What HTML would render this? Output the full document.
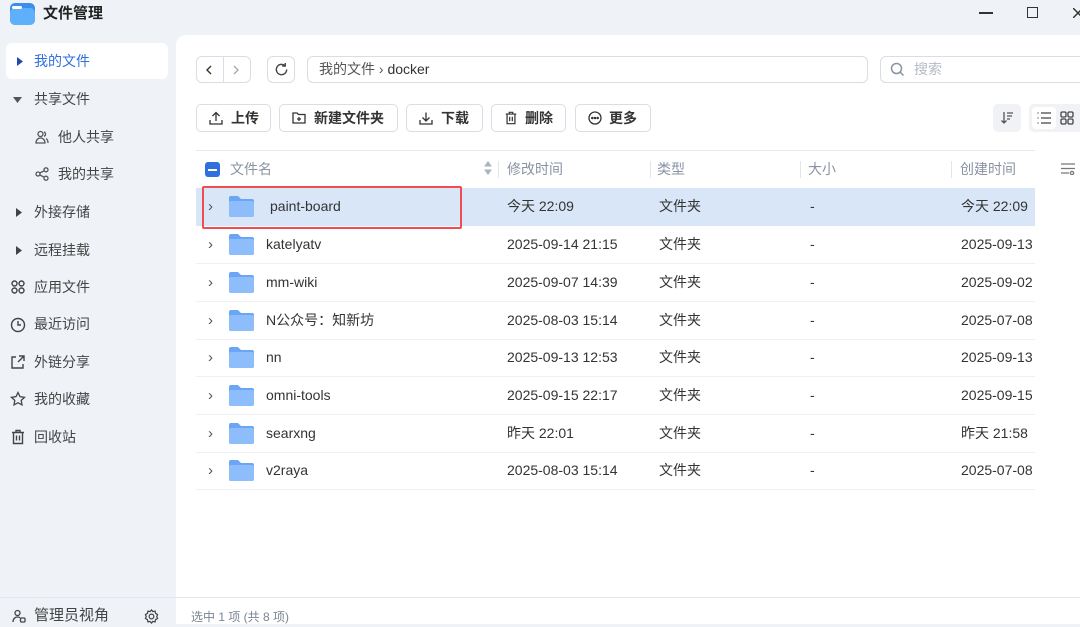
<!DOCTYPE html>
<html><head><meta charset="utf-8"><style>
*{box-sizing:border-box;margin:0;padding:0}
body{width:1080px;height:624px;overflow:hidden;background:#eff3f8;font-family:"Liberation Sans","Noto Sans CJK SC",sans-serif;color:#333;position:relative}
.abs{position:absolute}
.title{left:43px;top:3px;font-size:15px;font-weight:bold;color:#222;line-height:22px}
.side{font-size:14px;color:#444}
.side div.it{position:absolute;left:0;width:168px;height:36px;line-height:36px}
.side svg{position:absolute}
.panel{left:176px;top:35px;width:904px;height:562px;background:#fff;border-top-left-radius:10px}
.btn{position:absolute;top:104px;height:28px;border:1px solid #d8dde6;border-radius:5px;background:#fff;font-size:14px;font-weight:bold;color:#333;line-height:26px}
.btn svg{position:absolute;left:12px;top:6px}
.hd{position:absolute;top:150px;left:196px;width:839px;height:37px;border-top:1px solid #e6e9ee;font-size:14px;color:#8a93a3}
.hd span{position:absolute;top:0;line-height:36px}
.sep{position:absolute;top:10px;width:1px;height:17px;background:#e2e5ea}
.row{position:absolute;left:196px;width:839px;height:38px;border-bottom:1px solid #eef0f3;font-size:14px;color:#333}
.row span{position:absolute;top:0;line-height:37px}
.row .ch{left:12px;color:#555;font-size:15px}
.fold{position:absolute;left:33px;top:8px;width:25px;height:21px}
</style></head><body>
<svg class="abs" style="left:10px;top:3px" width="25" height="22" viewBox="0 0 25 22"><rect x="0" y="0" width="25" height="22" rx="5" fill="#3b8df0"/><rect x="0" y="5" width="25" height="17" rx="5" fill="#5fb0fa"/><rect x="2" y="3" width="10" height="3" rx="1.5" fill="#fff"/></svg>
<div class="abs title">文件管理</div>
<div class="abs" style="left:979px;top:12px;width:14px;height:1.5px;background:#333"></div>
<div class="abs" style="left:1027px;top:7px;width:11px;height:11px;border:1.5px solid #333"></div>
<svg class="abs" style="left:1073px;top:8px" width="10" height="10" viewBox="0 0 10 10"><path d="M0 0l10 10M10 0L0 10" stroke="#333" stroke-width="1.5"/></svg>

<div class="side">
<div class="it" style="left:6px;top:43px;width:162px;background:#fff;border-radius:6px;color:#2f6fde"><svg style="left:11px;top:14px" width="6" height="9"><path d="M0 0l6 4.5L0 9z" fill="#1e4fa8"/></svg><span style="position:absolute;left:28px">我的文件</span></div>
<div class="it" style="top:81px"><svg style="left:13px;top:16px" width="9" height="6"><path d="M0 0h9L4.5 6z" fill="#555"/></svg><span style="position:absolute;left:34px">共享文件</span></div>
<div class="it" style="top:119px"><svg style="left:35px;top:11px" width="14" height="14" viewBox="0 0 14 14" fill="none" stroke="#555" stroke-width="1.3"><circle cx="5.5" cy="4" r="2.5"/><path d="M1 13c0-3 2-5 4.5-5s4.5 2 4.5 5zM9 1.8a2.5 2.5 0 0 1 0 4.6M11 8.5c1.3.8 2 2.5 2 4.5"/></svg><span style="position:absolute;left:58px">他人共享</span></div>
<div class="it" style="top:156px"><svg style="left:35px;top:11px" width="14" height="14" viewBox="0 0 14 14" fill="none" stroke="#555" stroke-width="1.3"><circle cx="3" cy="7" r="2"/><circle cx="11" cy="2.8" r="2"/><circle cx="11" cy="11.2" r="2"/><path d="M4.8 6l4.4-2.2M4.8 8l4.4 2.2"/></svg><span style="position:absolute;left:58px">我的共享</span></div>
<div class="it" style="top:194px"><svg style="left:16px;top:14px" width="6" height="9"><path d="M0 0l6 4.5L0 9z" fill="#444"/></svg><span style="position:absolute;left:34px">外接存储</span></div>
<div class="it" style="top:232px"><svg style="left:16px;top:14px" width="6" height="9"><path d="M0 0l6 4.5L0 9z" fill="#444"/></svg><span style="position:absolute;left:34px">远程挂载</span></div>
<div class="it" style="top:269px"><svg style="left:11px;top:11px" width="14" height="14" viewBox="0 0 14 14" fill="none" stroke="#444" stroke-width="1.4"><circle cx="3.5" cy="3.5" r="2.5"/><circle cx="10.5" cy="3.5" r="2.5"/><circle cx="3.5" cy="10.5" r="2.5"/><circle cx="10.5" cy="10.5" r="2.5"/></svg><span style="position:absolute;left:34px">应用文件</span></div>
<div class="it" style="top:306px"><svg style="left:10px;top:11px" width="16" height="16" viewBox="0 0 16 16" fill="none" stroke="#444" stroke-width="1.4"><circle cx="8" cy="8" r="6.5"/><path d="M8 4v4h3"/></svg><span style="position:absolute;left:34px">最近访问</span></div>
<div class="it" style="top:344px"><svg style="left:11px;top:11px" width="14" height="14" viewBox="0 0 14 14" fill="none" stroke="#444" stroke-width="1.4"><path d="M5 2H1v11h11V9M8 1h5v5M13 1L7 7"/></svg><span style="position:absolute;left:34px">外链分享</span></div>
<div class="it" style="top:381px"><svg style="left:10px;top:10px" width="16" height="16" viewBox="0 0 16 16" fill="none" stroke="#444" stroke-width="1.3"><path d="M8 1.5l2 4.2 4.5.6-3.3 3.1.8 4.5L8 11.7l-4 2.2.8-4.5L1.5 6.3 6 5.7z"/></svg><span style="position:absolute;left:34px">我的收藏</span></div>
<div class="it" style="top:419px"><svg style="left:11px;top:10px" width="14" height="16" viewBox="0 0 14 16" fill="none" stroke="#444" stroke-width="1.4"><path d="M1 3.5h12M5 3.5V1.5h4v2M2.5 3.5V14.5h9V3.5M5.5 6.5v5M8.5 6.5v5"/></svg><span style="position:absolute;left:34px">回收站</span></div>
</div>

<div class="abs panel"></div>
<div class="abs" style="left:0;top:597px;width:1080px;height:1px;background:#e3e7ed"></div>
<div class="abs" style="left:176px;top:598px;width:904px;height:26px;background:#fff"></div>
<svg class="abs" style="left:12px;top:609px" width="14" height="14" viewBox="0 0 14 14" fill="none" stroke="#444" stroke-width="1.3"><circle cx="5.5" cy="4" r="2.5"/><path d="M1 13c0-3 2-5 4.5-5 1 0 2 .3 2.6.8"/><rect x="8.5" y="9" width="4.5" height="4" rx="1"/></svg>
<div class="abs" style="left:34px;top:605px;font-size:15px;color:#444;line-height:22px">管理员视角</div>
<svg class="abs" style="left:144px;top:609px" width="15" height="15" viewBox="0 0 16 16" fill="none" stroke="#444" stroke-width="1.3"><circle cx="8" cy="8" r="2.5"/><path d="M8 1l1.5 1.8 2.3-.5.5 2.3L14.5 6 13.6 8l.9 2-2.2 1.4-.5 2.3-2.3-.5L8 15l-1.5-1.8-2.3.5-.5-2.3L1.5 10l.9-2-.9-2 2.2-1.4.5-2.3 2.3.5z"/></svg>
<div class="abs" style="left:191px;top:608px;font-size:12px;color:#7a8494;line-height:18px">选中 1 项 (共 8 项)</div>

<!-- nav -->
<div class="abs" style="left:196px;top:56px;width:55px;height:27px;border:1px solid #d8dde6;border-radius:6px"><div style="position:absolute;left:26px;top:0;width:1px;height:25px;background:#d8dde6"></div>
<svg style="position:absolute;left:9px;top:8px" width="6" height="10"><path d="M5 1L1 5l4 4" fill="none" stroke="#333" stroke-width="1.4"/></svg>
<svg style="position:absolute;left:36px;top:8px" width="6" height="10"><path d="M1 1l4 4-4 4" fill="none" stroke="#aaa" stroke-width="1.4"/></svg></div>
<div class="abs" style="left:267px;top:56px;width:28px;height:27px;border:1px solid #d8dde6;border-radius:6px"><svg style="position:absolute;left:6px;top:5px" width="15" height="15" viewBox="0 0 16 16" fill="none" stroke="#444" stroke-width="1.5"><path d="M13.5 8A5.5 5.5 0 1 1 11.5 3.8M12 1v3.3H8.7"/></svg></div>
<div class="abs" style="left:307px;top:56px;width:561px;height:27px;border:1px solid #d8dde6;border-radius:6px;font-size:14px;line-height:25px;padding-left:11px;color:#555">我的文件 › <span style="color:#333">docker</span></div>
<div class="abs" style="left:880px;top:56px;width:210px;height:27px;border:1px solid #d8dde6;border-radius:6px;font-size:14px;line-height:25px;padding-left:33px;color:#b5bcc7">搜索</div>
<svg class="abs" style="left:890px;top:62px" width="15" height="15" viewBox="0 0 15 15"><circle cx="6.5" cy="6.5" r="5" fill="none" stroke="#8a93a3" stroke-width="1.5"/><path d="M10 10l3.5 3.5" stroke="#8a93a3" stroke-width="1.5"/></svg>

<div class="btn" style="left:196px;width:75px"><svg width="14" height="14" viewBox="0 0 14 14" fill="none" stroke="#333" stroke-width="1.3"><path d="M7 10V1.5M3.5 5L7 1.5 10.5 5M1 9v4h12V9"/></svg><span style="position:absolute;left:34px">上传</span></div>
<div class="btn" style="left:279px;width:119px"><svg width="14" height="14" viewBox="0 0 14 14" fill="none" stroke="#333" stroke-width="1.3"><path d="M1 2h4l1.5 1.5H13V12H1zM7 6v4M5 8h4"/></svg><span style="position:absolute;left:34px">新建文件夹</span></div>
<div class="btn" style="left:406px;width:77px"><svg width="14" height="14" viewBox="0 0 14 14" fill="none" stroke="#333" stroke-width="1.3"><path d="M7 1.5V10M3.5 6.5L7 10l3.5-3.5M1 9v4h12V9"/></svg><span style="position:absolute;left:34px">下载</span></div>
<div class="btn" style="left:491px;width:75px"><svg width="14" height="14" viewBox="0 0 14 16" fill="none" stroke="#333" stroke-width="1.4"><path d="M1 3.5h12M5 3.5V1.5h4v2M2.5 3.5V14.5h9V3.5M5.5 6.5v5M8.5 6.5v5"/></svg><span style="position:absolute;left:33px">删除</span></div>
<div class="btn" style="left:575px;width:76px"><svg width="14" height="14" viewBox="0 0 14 14" fill="none" stroke="#333" stroke-width="1.3"><circle cx="7" cy="7" r="6"/><circle cx="4.3" cy="7" r=".6" fill="#333"/><circle cx="7" cy="7" r=".6" fill="#333"/><circle cx="9.7" cy="7" r=".6" fill="#333"/></svg><span style="position:absolute;left:33px">更多</span></div>
<div class="abs" style="left:993px;top:104px;width:28px;height:28px;background:#f0f2f5;border-radius:5px"><svg style="position:absolute;left:7px;top:7px" width="14" height="14" viewBox="0 0 14 14" fill="none" stroke="#555" stroke-width="1.3"><path d="M4 1v11M1.5 9.5L4 12l2.5-2.5M7 2h6M7 5h5M7 8h3"/></svg></div>
<div class="abs" style="left:1029px;top:104px;width:60px;height:28px;background:#f0f2f5;border-radius:5px"><div style="position:absolute;left:3px;top:3px;width:24px;height:22px;background:#fff;border-radius:4px"><svg style="position:absolute;left:5px;top:5px" width="14" height="12" viewBox="0 0 14 12" fill="none" stroke="#444" stroke-width="1.3"><path d="M4 1h10M4 6h10M4 11h10M0.5 1h1M0.5 6h1M0.5 11h1"/></svg></div><svg style="position:absolute;left:31px;top:7px" width="14" height="14" viewBox="0 0 14 14" fill="none" stroke="#444" stroke-width="1.3"><rect x="1" y="1" width="5" height="5" rx="1.2"/><rect x="8" y="1" width="5" height="5" rx="1.2"/><rect x="1" y="8" width="5" height="5" rx="1.2"/><rect x="8" y="8" width="5" height="5" rx="1.2"/></svg></div>

<div class="hd">
<div style="position:absolute;left:9px;top:11px;width:15px;height:15px;background:#2f6fde;border-radius:3px"><div style="position:absolute;left:3px;top:6.5px;width:9px;height:2px;background:#fff"></div></div>
<span style="left:34px">文件名</span>
<svg style="position:absolute;left:288px;top:10px" width="8" height="14"><path d="M0 5.5L4 0l4 5.5zM0 8.5L4 14l4-5.5z" fill="#aab3c0"/></svg>
<div class="sep" style="left:302px"></div><span style="left:311px">修改时间</span>
<div class="sep" style="left:454px"></div><span style="left:461px">类型</span>
<div class="sep" style="left:604px"></div><span style="left:612px">大小</span>
<div class="sep" style="left:755px"></div><span style="left:764px">创建时间</span>
</div>
<svg class="abs" style="left:1061px;top:163px" width="14" height="12" viewBox="0 0 14 12" fill="none" stroke="#777" stroke-width="1.3"><path d="M0 1h14M0 5.5h14M0 10h8"/><circle cx="11" cy="10" r="1.6"/></svg>

<div class="row" style="top:188px;background:#d8e6f7;border-bottom:none"><span class="ch">›</span><svg class="fold" viewBox="0 0 25 21"><path d="M0 2a2 2 0 0 1 2-2h7l3 3h11a2 2 0 0 1 2 2v14a2 2 0 0 1-2 2H2a2 2 0 0 1-2-2z" fill="#6ba5f5"/><rect x="0" y="5" width="25" height="16" rx="2" fill="#8dbdfa"/></svg><span style="left:74px">paint-board</span><span style="left:311px">今天 22:09</span><span style="left:463px">文件夹</span><span style="left:614px">-</span><span style="left:765px">今天 22:09</span></div>
<div class="abs" style="left:202px;top:186px;width:260px;height:43px;border:2.5px solid #ef4d50;border-radius:2px"></div>

<div class="row" style="top:226px"><span class="ch">›</span><svg class="fold" viewBox="0 0 25 21"><path d="M0 2a2 2 0 0 1 2-2h7l3 3h11a2 2 0 0 1 2 2v14a2 2 0 0 1-2 2H2a2 2 0 0 1-2-2z" fill="#6ba5f5"/><rect x="0" y="5" width="25" height="16" rx="2" fill="#8dbdfa"/></svg><span style="left:70px">katelyatv</span><span style="left:311px">2025-09-14 21:15</span><span style="left:463px">文件夹</span><span style="left:614px">-</span><span style="left:765px">2025-09-13</span></div>
<div class="row" style="top:264px"><span class="ch">›</span><svg class="fold" viewBox="0 0 25 21"><path d="M0 2a2 2 0 0 1 2-2h7l3 3h11a2 2 0 0 1 2 2v14a2 2 0 0 1-2 2H2a2 2 0 0 1-2-2z" fill="#6ba5f5"/><rect x="0" y="5" width="25" height="16" rx="2" fill="#8dbdfa"/></svg><span style="left:70px">mm-wiki</span><span style="left:311px">2025-09-07 14:39</span><span style="left:463px">文件夹</span><span style="left:614px">-</span><span style="left:765px">2025-09-02</span></div>
<div class="row" style="top:302px"><span class="ch">›</span><svg class="fold" viewBox="0 0 25 21"><path d="M0 2a2 2 0 0 1 2-2h7l3 3h11a2 2 0 0 1 2 2v14a2 2 0 0 1-2 2H2a2 2 0 0 1-2-2z" fill="#6ba5f5"/><rect x="0" y="5" width="25" height="16" rx="2" fill="#8dbdfa"/></svg><span style="left:70px">N公众号：知新坊</span><span style="left:311px">2025-08-03 15:14</span><span style="left:463px">文件夹</span><span style="left:614px">-</span><span style="left:765px">2025-07-08</span></div>
<div class="row" style="top:339px"><span class="ch">›</span><svg class="fold" viewBox="0 0 25 21"><path d="M0 2a2 2 0 0 1 2-2h7l3 3h11a2 2 0 0 1 2 2v14a2 2 0 0 1-2 2H2a2 2 0 0 1-2-2z" fill="#6ba5f5"/><rect x="0" y="5" width="25" height="16" rx="2" fill="#8dbdfa"/></svg><span style="left:70px">nn</span><span style="left:311px">2025-09-13 12:53</span><span style="left:463px">文件夹</span><span style="left:614px">-</span><span style="left:765px">2025-09-13</span></div>
<div class="row" style="top:377px"><span class="ch">›</span><svg class="fold" viewBox="0 0 25 21"><path d="M0 2a2 2 0 0 1 2-2h7l3 3h11a2 2 0 0 1 2 2v14a2 2 0 0 1-2 2H2a2 2 0 0 1-2-2z" fill="#6ba5f5"/><rect x="0" y="5" width="25" height="16" rx="2" fill="#8dbdfa"/></svg><span style="left:70px">omni-tools</span><span style="left:311px">2025-09-15 22:17</span><span style="left:463px">文件夹</span><span style="left:614px">-</span><span style="left:765px">2025-09-15</span></div>
<div class="row" style="top:415px"><span class="ch">›</span><svg class="fold" viewBox="0 0 25 21"><path d="M0 2a2 2 0 0 1 2-2h7l3 3h11a2 2 0 0 1 2 2v14a2 2 0 0 1-2 2H2a2 2 0 0 1-2-2z" fill="#6ba5f5"/><rect x="0" y="5" width="25" height="16" rx="2" fill="#8dbdfa"/></svg><span style="left:70px">searxng</span><span style="left:311px">昨天 22:01</span><span style="left:463px">文件夹</span><span style="left:614px">-</span><span style="left:765px">昨天 21:58</span></div>
<div class="row" style="top:452px"><span class="ch">›</span><svg class="fold" viewBox="0 0 25 21"><path d="M0 2a2 2 0 0 1 2-2h7l3 3h11a2 2 0 0 1 2 2v14a2 2 0 0 1-2 2H2a2 2 0 0 1-2-2z" fill="#6ba5f5"/><rect x="0" y="5" width="25" height="16" rx="2" fill="#8dbdfa"/></svg><span style="left:70px">v2raya</span><span style="left:311px">2025-08-03 15:14</span><span style="left:463px">文件夹</span><span style="left:614px">-</span><span style="left:765px">2025-07-08</span></div>
</body></html>
